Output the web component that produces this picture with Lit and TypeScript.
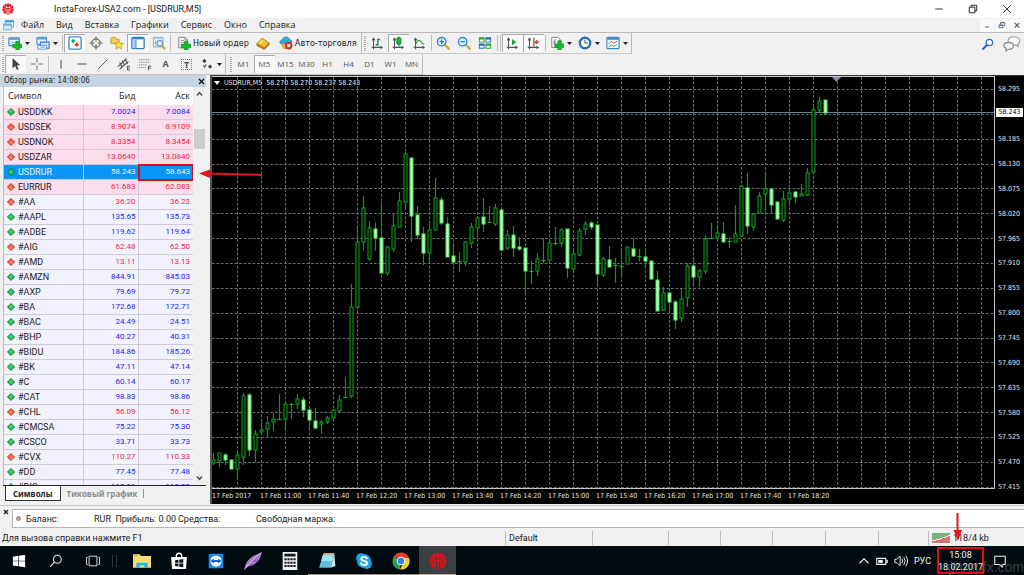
import { LitElement, html, css, svg, nothing } from "lit";
import { customElement } from "lit/decorators.js";
import { classMap } from "lit/directives/class-map.js";

type Quote = [name: string, bid: string, ask: string, up: boolean, group: "fx" | "stock"];

const QUOTES: Quote[] = [
  ["USDDKK", "7.0024", "7.0084", true, "fx"],
  ["USDSEK", "8.9074", "8.9109", false, "fx"],
  ["USDNOK", "8.3354", "8.3454", false, "fx"],
  ["USDZAR", "13.0640", "13.0840", false, "fx"],
  ["USDRUR", "58.243", "58.643", true, "fx"],
  ["EURRUR", "61.683", "62.083", false, "fx"],
  ["#AA", "36.20", "36.23", false, "stock"],
  ["#AAPL", "135.65", "135.73", true, "stock"],
  ["#ADBE", "119.62", "119.64", true, "stock"],
  ["#AIG", "62.48", "62.50", false, "stock"],
  ["#AMD", "13.11", "13.13", false, "stock"],
  ["#AMZN", "844.91", "845.03", true, "stock"],
  ["#AXP", "79.69", "79.72", true, "stock"],
  ["#BA", "172.68", "172.71", true, "stock"],
  ["#BAC", "24.49", "24.51", true, "stock"],
  ["#BHP", "40.27", "40.31", true, "stock"],
  ["#BIDU", "184.86", "185.26", true, "stock"],
  ["#BK", "47.11", "47.14", true, "stock"],
  ["#C", "60.14", "60.17", true, "stock"],
  ["#CAT", "98.83", "98.86", true, "stock"],
  ["#CHL", "56.09", "56.12", false, "stock"],
  ["#CMCSA", "75.22", "75.30", true, "stock"],
  ["#CSCO", "33.71", "33.73", true, "stock"],
  ["#CVX", "110.27", "110.33", false, "stock"],
  ["#DD", "77.45", "77.48", true, "stock"],
  ["#DIS", "110.01", "110.03", true, "stock"],
];

/* high, body top, body bottom, low, 1 = falling (filled) */
const CANDLES: number[][] = [
  [453, 460, 463, 465, 0], [453, 453, 461, 467, 0], [453, 455, 460, 465, 1], [460, 460, 469, 469, 1],
  [452, 455, 469, 480, 0], [393, 396, 457, 465, 0], [393, 395, 450, 456, 1], [430, 434, 450, 462, 0],
  [420, 430, 432, 435, 0], [416, 423, 429, 438, 0], [413, 419, 422, 431, 0], [394, 419, 419, 419, 0],
  [401, 404, 419, 428, 0], [403, 404, 404, 419, 0], [394, 399, 404, 409, 0], [397, 400, 410, 417, 1],
  [408, 410, 420, 429, 1], [408, 421, 428, 429, 1], [420, 422, 424, 434, 0], [416, 418, 422, 424, 0],
  [409, 410, 418, 419, 0], [395, 400, 411, 412, 0], [377, 397, 398, 398, 0], [284, 307, 396, 398, 0],
  [228, 242, 307, 309, 0], [196, 208, 242, 250, 0], [221, 228, 259, 261, 0], [222, 229, 238, 251, 1],
  [202, 238, 273, 273, 1], [246, 247, 273, 276, 0], [213, 226, 249, 252, 0], [192, 201, 227, 227, 0],
  [149, 154, 202, 208, 0], [158, 158, 216, 242, 1], [206, 215, 235, 239, 1], [227, 234, 253, 265, 1],
  [223, 230, 253, 262, 0], [178, 198, 230, 230, 0], [197, 200, 223, 225, 1], [217, 224, 257, 257, 1],
  [243, 256, 262, 265, 1], [252, 261, 261, 272, 0], [241, 242, 262, 266, 0], [223, 227, 243, 248, 0],
  [216, 218, 228, 237, 0], [198, 217, 224, 232, 1], [206, 222, 223, 223, 0], [204, 208, 224, 226, 0],
  [210, 210, 250, 250, 1], [230, 235, 248, 250, 0], [226, 235, 248, 257, 1], [237, 247, 249, 251, 1],
  [248, 248, 271, 293, 1], [261, 271, 271, 284, 0], [253, 259, 271, 276, 0], [238, 260, 260, 263, 0],
  [240, 243, 260, 262, 0], [227, 243, 243, 245, 0], [228, 230, 243, 247, 0], [229, 229, 268, 278, 1],
  [248, 254, 269, 271, 0], [228, 231, 255, 256, 0], [221, 224, 229, 235, 0], [221, 223, 227, 230, 1],
  [225, 225, 274, 287, 1], [257, 259, 275, 277, 0], [246, 260, 267, 267, 1], [258, 265, 265, 283, 0],
  [251, 266, 266, 275, 0], [247, 247, 264, 264, 0], [238, 249, 256, 257, 1], [249, 256, 256, 261, 0],
  [248, 257, 261, 266, 1], [261, 261, 279, 280, 1], [271, 280, 311, 311, 1], [287, 293, 310, 311, 0],
  [292, 293, 302, 311, 1], [300, 302, 320, 329, 1], [289, 299, 318, 322, 0], [263, 266, 298, 307, 0],
  [257, 266, 277, 284, 1], [269, 271, 277, 287, 0], [235, 239, 271, 274, 0], [223, 238, 238, 239, 0],
  [225, 233, 237, 240, 0], [222, 234, 242, 242, 1], [237, 241, 241, 248, 0], [205, 234, 242, 242, 0],
  [186, 186, 236, 236, 0], [173, 188, 226, 234, 1], [213, 214, 227, 231, 0], [192, 196, 213, 213, 0],
  [173, 189, 194, 213, 0], [189, 189, 205, 213, 1], [202, 202, 219, 219, 1], [191, 199, 220, 222, 0],
  [189, 193, 199, 203, 0], [191, 192, 197, 203, 1], [184, 194, 196, 196, 0], [168, 173, 195, 196, 0],
  [107, 110, 172, 172, 0], [97, 101, 110, 112, 0], [100, 100, 113, 115, 1],
];

const PRICES = ["58.295", "", "58.185", "58.130", "58.075", "58.020", "57.965", "57.910", "57.855",
  "57.800", "57.745", "57.690", "57.635", "57.580", "57.525", "57.470", "57.415"];
const TIMES = ["17 Feb 2017", "17 Feb 11:00", "17 Feb 11:40", "17 Feb 12:20", "17 Feb 13:00", "17 Feb 13:40",
  "17 Feb 14:20", "17 Feb 15:00", "17 Feb 15:40", "17 Feb 16:20", "17 Feb 17:00", "17 Feb 17:40", "17 Feb 18:20"];

const plus = (x: number, y: number) => svg`<path d="M${x} ${y - 5}h4v3.5h3.5v4h-3.5v3.5h-4v-3.5h-3.5v-4h3.5z" fill="#12b92c" stroke="#078a1b" stroke-width=".7"/>`;
const axes = svg`<path d="M4 3v12M2 13h12M2.500 5L4 2.500 5.500 5M12 11.500l2 1.500-2 1.500" fill="none" stroke="#555" stroke-width="1.200"/>`;
const lens = (c: string, sign: unknown) => svg`<path d="M10 10l4.500 4.500" stroke="#d9a735" stroke-width="2.800" stroke-linecap="round"/><circle cx="6.500" cy="6.500" r="4.800" fill="#e2f3ff" stroke="${c}" stroke-width="1.600"/>${sign}`;
const insta = svg`<path d="M4.500 12.800A5.800 5.800 0 1 1 11.500 12.800" fill="none" stroke="#e0121b" stroke-width="3.600" stroke-dasharray="2.700 .45"/><path d="M8 6.500v9.300M5.300 7.500v7.500M10.700 7.500v7.500" stroke="#e0121b" stroke-width="1.500" fill="none"/><path d="M4 6.500q4 2.600 8 0" fill="none" stroke="#e0121b" stroke-width="1.500"/><circle cx="8" cy="4.600" r="1.500" fill="#e0121b"/>`;

const ICONS: Record<string, unknown> = {
  insta,
  doc: svg`<path d="M3 2h11v9H3z" fill="#dff0ff" stroke="#4a93cf"/><path d="M3 2h11v2.500H3z" fill="#4a9be0"/><path d="M1 7h10v7.500H1z" fill="#eef8ff" stroke="#4a93cf"/><path d="M1 7h10v2H1zM3 12h6" fill="#67aee6" stroke="#67aee6" stroke-width=".7"/>`,
  newchart: svg`<rect x="1" y="2" width="12" height="9" rx="1" fill="#e8f5ff" stroke="#3a86c4" stroke-width="1.300"/><path d="M1.500 3.500h11" stroke="#3a86c4" stroke-width="1.500"/><path d="M3 9l2.500-2 2 1L10 6" fill="none" stroke="#5ca1d4"/>${plus(9, 11)}`,
  profiles: svg`<rect x="1" y="1.500" width="11" height="8" rx="1" fill="#eaf5ff" stroke="#4589c8" stroke-width="1.200"/><path d="M1.500 3.200h10" stroke="#4589c8" stroke-width="1.500"/><path d="M5 7h10v7H5z" fill="#c9e3f8" stroke="#3b78b8" stroke-width="1.200"/><path d="M2 11h10v4H2zM5 12.800h5" fill="#eff8ff" stroke="#5d96ca"/>`,
  watch: svg`<rect x="1" y="1" width="14" height="14" rx="1.500" fill="#f8fdff" stroke="#358fd0" stroke-width="1.500"/><path d="M6 3.200l2.500 2.500L6 8.200 3.500 5.700z" fill="#17a83a"/><path d="M10 7.200l2.700 2.700L10 12.600 7.300 9.900z" fill="#e53b20"/>`,
  target: svg`<circle cx="8" cy="8" r="4.700" fill="#fff" stroke="#666" stroke-width="1.400"/><path d="M8 .5v6M8 9.500v6M.5 8h6M9.500 8h6" stroke="#666" stroke-width="1.300"/>`,
  folder: svg`<path d="M1 3.500l1-2h4l1 2h3v5H1z" fill="#f5cf58" stroke="#b48a1d" stroke-width=".8"/><path d="M10 5l1.600 3.200 3.600.5-2.600 2.500.6 3.600L10 13.100l-3.200 1.700.6-3.600-2.600-2.500 3.600-.5z" fill="#ffe048" stroke="#c08b17" stroke-width=".9"/>`,
  nav: svg`<rect x="1" y="1.500" width="14" height="13" rx="1.500" fill="#f8fcff" stroke="#2d80c7" stroke-width="1.500"/><path d="M2 3h12" stroke="#2d80c7" stroke-width="1.600"/><path d="M2 4h3.500v10H2z" fill="#aacdf0"/><path d="M5.700 4v10" stroke="#2d80c7"/>`,
  tester: svg`<path d="M1.500 1.500h11v11h-11z" fill="#eef6fc" stroke="#86a9c6"/><path d="M2 3h10M4 5v7M7 5v7M2 8h9" stroke="#9bb9d2"/><path d="M11 11l4 4" stroke="#d9a735" stroke-width="2.500"/><circle cx="9" cy="8.500" r="3.300" fill="#d8edfb" stroke="#588fc2" stroke-width="1.200"/>`,
  order: svg`<path d="M2 1.500h7l3 3v9H2z" fill="#fafafa" stroke="#777"/><path d="M9 1.500v3h3M4 5h4M4 7.500h6M4 10h4" fill="none" stroke="#888"/>${plus(8.500, 11)}`,
  book: svg`<path d="M1 9l6-6.500L15 8l-5.500 6z" fill="#f5c531" stroke="#a87505"/><path d="M1 9l8.500 5L15 8v2l-5.500 5.500L1 11z" fill="#d18c12" stroke="#9b6704" stroke-width=".7"/><path d="M4 8.500L7.500 5" stroke="#fff2a8" stroke-width="1.300"/>`,
  auto: svg`<path d="M2 7.500h11L10.500 14H5z" fill="#f3c64a" stroke="#ad801c" stroke-width=".8"/><path d="M.8 7.500C1 5 3 4.500 4 4c.6-2 2-3 4-3s3.600 1 4 3c1.300.4 3 1.200 3 3-2 1.800-4 2-7 2s-6-.3-7.200-1.500z" fill="#37a5df" stroke="#1877ad" stroke-width=".7"/><circle cx="11" cy="11" r="4.300" fill="#e32b1c"/><rect x="9.300" y="9.300" width="3.400" height="3.400" fill="#fff"/>`,
  bars: svg`${axes}<path d="M9 3v8M9 4h2.500M6.500 10H9" stroke="#119436" stroke-width="1.500"/>`,
  candle: svg`${axes}<path d="M9 .5v12" stroke="#12962f" stroke-width="1.200"/><rect x="6.700" y="2" width="4.600" height="7.500" rx="1" fill="#18b940" stroke="#0c7d25"/>`,
  line: svg`${axes}<path d="M4 9.500c3-6 5-5 6.500-2.500 1 1.500 2 2 3.500 2.500" fill="none" stroke="#2f9f4b" stroke-width="1.300"/>`,
  zoomin: lens("#3089cd", svg`<path d="M4 6.500h5M6.500 4v5" stroke="#2174b8" stroke-width="1.400"/>`),
  zoomout: lens("#3089cd", svg`<path d="M4 6.500h5" stroke="#2174b8" stroke-width="1.400"/>`),
  tile: svg`<path d="M1 1.500h6.500v6H1zM8.500 8.500H15v6H8.500z" fill="#2f9e38"/><path d="M8.500 1.500H15v6H8.500zM1 8.500h6.500v6H1z" fill="#2b69b8"/><path d="M2 4h4.500v2.500H2zM9.500 4H14v2.500H9.500zM2 11h4.500v2.500H2zM9.500 11H14v2.500H9.500z" fill="#e5f5ee"/>`,
  scroll: svg`${axes}<path d="M8 3.500l5 3.500-5 3.500z" fill="#16a532"/>`,
  shift: svg`${axes}<path d="M9 2v10" stroke="#555" stroke-width="1.300"/><path d="M15 7h-4M13 4.800L10.500 7 13 9.200" fill="none" stroke="#d53426" stroke-width="1.300"/>`,
  indicator: svg`<path d="M2 1.500h7l2.500 2.500v9H2z" fill="#f8f8f8" stroke="#777"/><path d="M6.500 4c-2 0-1 3-2 6M4 7h3" fill="none" stroke="#777"/>${plus(9, 10.500)}`,
  clock: svg`<circle cx="8" cy="8" r="6" fill="#f4faff" stroke="#246fb9" stroke-width="2.600"/><path d="M8 4.500V8h3.500" fill="none" stroke="#555" stroke-width="1.200"/>`,
  template: svg`<rect x="1" y="1.500" width="14" height="13" rx="1" fill="#f5fbff" stroke="#3f86bd" stroke-width="1.300"/><path d="M1.500 3.300h13" stroke="#3f8fd0" stroke-width="2.200"/><path d="M3 8.500l3-2 3 1.500 4-2" fill="none" stroke="#c3543f"/><path d="M3 12.500l3-2.500 3 2 4-2.500" fill="none" stroke="#2f9e4b"/>`,
  search: svg`<path d="M6.500 9.500L1.500 14.500" stroke="#2457b5" stroke-width="2.800" stroke-linecap="round"/><circle cx="9.800" cy="6" r="4.300" fill="#fff" stroke="#2f6bd0" stroke-width="1.700"/>`,
  chat: svg`<path d="M9.500 1.500c3 0 5.500 1.600 5.500 3.900 0 1.300-.7 2.200-1.700 2.900l.4 2-2.200-1.300c-3.500.5-7-.9-7-3.600 0-2.300 2-3.900 5-3.900z" fill="#f5f5f5" stroke="#999"/><path d="M5 6.500c2.500 0 4.300 1.200 4.300 3S7.500 12.700 5 12.700L2.500 14l.4-2C1.500 11.500.700 10.600.700 9.500c0-1.800 1.800-3 4.300-3z" fill="#eee" stroke="#888"/>`,
  cursor: svg`<path d="M4 1v12l3-2.800 2 4.600 2-.9-2-4.400h4z" fill="#444"/>`,
  cross: svg`<path d="M8 1v5.500M8 9.500V15M1 8h5.500M9.500 8H15" stroke="#777" stroke-width="1.100"/>`,
  vline: svg`<path d="M8 3v10" stroke="#555" stroke-width="1.200"/>`,
  hline: svg`<path d="M3 8h10" stroke="#555" stroke-width="1.200"/>`,
  trend: svg`<path d="M3 13L13 3" stroke="#555" stroke-width="1.100"/>`,
  channel: svg`<path d="M1 11l10-9M3 14l10-9M3 6l3 6M6 4l3 6M9 2l3 6" stroke="#555" stroke-width="1.200"/><path d="M15 10.500h-3v4.500h3M12 12.700h2.500" fill="none" stroke="#444"/>`,
  fibo: svg`<path d="M1 3h13M1 6h13M1 9h10M1 12h8" stroke="#777" stroke-dasharray="1.500 1"/><path d="M15 10.500h-3V15M12 12.700h2.500" fill="none" stroke="#444"/>`,
  arrows: svg`<path d="M5 2l2.500 2.500L5 7 2.500 4.500zM11.500 8.500L14 11l-2.500 2.500L9 11z" fill="#444"/><path d="M3.500 9.500l2 2 1.500-3" fill="none" stroke="#555" stroke-width="1.300"/>`,
  win: svg`<path d="M1 3l6-.9v5.500H1zM7.700 2L15 1v6.600H7.700zM1 8.300h6v5.600L1 13zM7.700 8.300H15V15l-7.300-1z" fill="#fff"/>`,
  find: svg`<circle cx="9.500" cy="6" r="4.500" fill="none" stroke="#eee" stroke-width="1.200"/><path d="M6.300 9.300L1.500 14.500" stroke="#eee" stroke-width="1.300"/>`,
  tasks: svg`<path d="M3.500 2.500h9v11h-9zM2 4H.5v8H2M14 4h1.500v8H14" fill="none" stroke="#ddd" stroke-width="1.100"/>`,
  explorer: svg`<path d="M0 2h6l1 1.500h9V14H0z" fill="#f9dc7b"/><path d="M1 3.500h3" stroke="#e0a52e"/><path d="M3 14V9.500h10V14h-3v-2H6v2z" fill="#27b3e1"/>`,
  store: svg`<path d="M1 4.500h14l-.8 10.500H1.800z" fill="#fff"/><path d="M5.500 4.500c0-4.500 5-4.500 5 0" fill="none" stroke="#fff" stroke-width="1.200"/><path d="M4.500 7.300l3-.4v2.600h-3zM8.200 6.800l3.600-.5v3.200H8.200zM4.500 10.200h3v2.600l-3-.4zM8.200 10.200h3.600v3.300l-3.600-.5z" fill="#06141c"/>`,
  tv: svg`<rect x="1.500" y="1.500" width="13" height="13" rx="1" fill="#1587ee"/><circle cx="8" cy="8" r="5" fill="#fff"/><path d="M3 8l3-2.200v1.400h4V5.800L13 8l-3 2.200V8.800H6v1.400z" fill="#1268c4"/>`,
  feather: svg`<path d="M.5 15.500C1 8 7 3 15.500.5 15.500 5 12 11.500 3.500 13z" fill="#a678c7"/><path d="M.5 15.500C5 9 9 5.500 15.500.5" stroke="#e0c9ee" fill="none" stroke-width=".8"/><path d="M5 11.500h4M8 8h5" stroke="#774a98" stroke-width=".7"/>`,
  calc: svg`<path d="M1.500 0h13v16h-13z" fill="#f3f3f3"/><path d="M3 1.500h10V4H3z" fill="#121a1f"/><path d="M3 6.500h10M3 9.500h10M3 12.500h10" stroke="#121a1f" stroke-width="1.800" stroke-dasharray="2 .67"/>`,
  note: svg`<path d="M4.500 2h10L11 14H1z" fill="#63c0d8"/><path d="M4.500 2h10l-1.800 6H2.800z" fill="#9fe1ee"/><path d="M14.500 2l1 10.500L11 14z" fill="#d9dfe2"/><path d="M5 1.500h9.500" stroke="#d7a85b" stroke-width="1.200"/>`,
  skype: svg`<circle cx="5.500" cy="5.500" r="4.500" fill="#17a6e6"/><circle cx="10.500" cy="10.500" r="4.500" fill="#17a6e6"/><circle cx="8" cy="8" r="6.300" fill="#17a6e6"/><path d="M10.700 5.500C9.800 4 5.700 3.900 5.700 6.200c0 2.300 5 1.200 5 3.600 0 2.300-4.500 2.300-5.500.3" fill="none" stroke="#fff" stroke-width="1.700" stroke-linecap="round"/>`,
  chrome: svg`<path d="M8 8L1.500 4.200A7.500 7.500 0 0 1 15 5H8z" fill="#e53e30"/><path d="M8 8l-1 7.500A7.500 7.500 0 0 1 1.500 4.200z" fill="#27a652"/><path d="M8 5h7A7.500 7.500 0 0 1 7 15.500L10.500 9z" fill="#fccb2e"/><circle cx="8" cy="8" r="3.700" fill="#fff"/><circle cx="8" cy="8" r="2.900" fill="#3b7ded"/>`,
  up: svg`<path d="M2 11l6-6 6 6" fill="none" stroke="#eee" stroke-width="1.500"/>`,
  battery: svg`<path d="M1 4.500h12v8H1zM13 7h2v3h-2" fill="none" stroke="#eee" stroke-width="1.400"/><path d="M3 6.500h6v4H3z" fill="#fff"/>`,
  sound: svg`<path d="M1 6h2.500L7 2.500v11L3.500 10H1zM9 5.500q2 2.500 0 5M11.200 3.700q3.300 4.300 0 8.600M13.300 2q4.500 6 0 12" fill="none" stroke="#eee" stroke-width="1.100"/>`,
  notice: svg`<path d="M2 2.500h12v9.500h-3.500v3L7.500 12H2z" fill="none" stroke="#eee" stroke-width="1.200"/>`,
  min: svg`<path d="M3 8h10" stroke="#222" stroke-width="1.200"/>`,
  restore: svg`<path d="M3 5.500h7.500V13H3zM5.500 5.500V3H13v7.500h-2.500" fill="none" stroke="#222" stroke-width="1.300"/>`,
  close: svg`<path d="M3 3l10 10M13 3L3 13" stroke="#222" stroke-width="1.200"/>`,
  mmin: svg`<path d="M4 12h8" stroke="#567" stroke-width="2"/>`,
  mrestore: svg`<path d="M2 8h8v5.500H2zM5 7V3h8.500v6H11M2 8.500h8M5 3.500h8" fill="none" stroke="#567" stroke-width="1.800"/>`,
  mclose: svg`<path d="M3.500 4l9 9M12.500 4l-9 9" stroke="#567" stroke-width="2.400"/>`,
};

const icon = (name: string, cls = "i14") => html`<svg class=${cls} viewBox="0 0 16 16" aria-hidden="true">${ICONS[name]}</svg>`;

@customElement("candle-chart")
class CandleChart extends LitElement {
  static styles = css`
    :host { display: grid; grid-template: minmax(0, 1fr) 15px / minmax(0, 1fr) 29px; background: #000; color: #e6e6e6;
      font: 7px/10px "DejaVu Sans Condensed", "DejaVu Sans", sans-serif; min-width: 0; position: relative;
      border-left: 2px solid #555; border-top: 1px solid #333; }
    .plot { width: 100%; height: 100%; display: block; border: solid #c8c8c8; border-width: 1px 1px 1px 0; box-sizing: border-box; }
    .prices { display: flex; flex-direction: column; padding-top: 8px; }
    .price { height: 25px; padding-left: 3px; flex: none; }
    .price:nth-child(7n) { height: 24px; }
    .times { display: flex; overflow: hidden; padding-top: 2px; grid-column: 1 / -1; }
    .time { flex: 0 0 48px; white-space: nowrap; }
    .title { position: absolute; left: 2px; top: 2px; display: flex; gap: 4px; align-items: center; }
    .mark { width: 6px; height: 4px; }
    .now { position: absolute; right: 1px; top: 32px; width: 27px; background: #fff; color: #000; text-align: center; line-height: 9px; }
  `;

  private candle(c: number[], i: number) {
    const [high, top, bottom, low, falling] = c;
    const x = 1.5 + i * 6;
    const wick = svg`<path d="M${x} ${high}V${top}M${x} ${bottom}V${low}" stroke="#0b9d10" stroke-width="1.200"/>`;
    if (bottom - top < 2) {
      return svg`${wick}<path d="M${x - 2} ${top + 0.5}h4" stroke="#12b818" stroke-width="1.200"/>`;
    }
    return svg`${wick}<rect x=${x - 1.5} y=${top} width="3" height=${bottom - top} fill=${falling ? "#c4ffc4" : "#000"}
      stroke=${falling ? "#4be85c" : "#12a818"} stroke-width="1"/>`;
  }

  render() {
    const columns = Array.from({ length: 80 }, (_, i) => 25.5 + i * 24);
    const rows = PRICES.map((_, i) => Math.round(89 + i * 24.86) + 0.5);
    return html`
      <svg class="plot" role="img" aria-label="USDRUR M5">
        <g transform="translate(0 -77)">
          <g stroke="#66707b" stroke-width="1" stroke-dasharray="2.700 1.800">
            ${columns.map((x) => svg`<path d="M${x} 77v430"/>`)}
            ${rows.map((y) => svg`<path d="M0 ${y}h2400"/>`)}
          </g>
          <path d="M0 112.500h2400" stroke="#70808c"/>
          <path d="M620 77h9l-4.500 5z" fill="#8492a6"/>
          ${CANDLES.map((c, i) => this.candle(c, i))}
        </g>
      </svg>
      <div class="prices">${PRICES.map((p) => html`<span class="price">${p}</span>`)}</div>
      <div class="times">${TIMES.map((t) => html`<span class="time">${t}</span>`)}</div>
      <div class="title"><svg class="mark" viewBox="0 0 6 4"><path d="M0 0h6L3 4z" fill="#fff"/></svg>
        <span>USDRUR,M5&nbsp; 58.270 58.270 58.237 58.243</span></div>
      <span class="now">58.243</span>`;
  }
}

@customElement("market-watch")
class MarketWatch extends LitElement {
  static styles = css`
    :host { display: flex; flex-direction: column; min-height: 0; background: #f0f0f0; font: 9px/14px Roboto, "Open Sans", sans-serif; padding: 0 4px 3px 3px; }
    button { font: inherit; border: 0; background: none; padding: 0; color: inherit; }
    .head { display: flex; justify-content: space-between; align-items: center; height: 12px; margin-left: -3px; padding: 0 1px 0 4px; background: #c6d5e4; font: 8px/12px "DejaVu Sans Condensed", sans-serif; color: #222; }
    .x { width: 7px; height: 7px; display: block; }
    .list { flex: 1; min-height: 0; display: grid; grid-template: minmax(0, 1fr) / minmax(0, 1fr) 13px; border-bottom: 1px solid #222; }
    .clip { overflow: hidden; background: #fff; border-left: 1px solid #bbb; }
    table { width: 100%; border-collapse: separate; border-spacing: 0; table-layout: fixed; }
    th { height: 18px; padding: 0 3px; font: 9px/14px "Open Sans", sans-serif; text-align: right; box-sizing: border-box; }
    th:first-child { width: 80px; text-align: left; padding-left: 4px; }
    td { height: 15px; line-height: 14px; padding: 0 2px 0 0; box-sizing: border-box; border-right: 1px solid #cdccd4; border-bottom: 1px solid #cdccd4; text-align: right; color: #2222f4; }
    td:last-child { border-right: 0; padding-right: 3px; }
    td:first-child { text-align: left; color: #222; padding-left: 3px; }
    .cell { display: flex; align-items: center; gap: 3px; }
    .tick { width: 8px; height: 8px; flex: none; }
    .num { font-size: 8px; }
    .fx td { background: #fddcee; }
    .stock td { background: #f2f2fe; }
    .down .num { color: #f52238; }
    .selected td, .selected .num { background: #0995f8; color: #e8f6ff; }
    .selected .ask { outline: 2px solid #d50f2a; outline-offset: -1px; }
    .bar { display: flex; flex-direction: column; align-items: center; background: #f0f0f0; padding: 4px 0; }
    .arrow { width: 7px; height: 6px; }
    .thumb { width: 11px; height: 20px; background: #cdcdcd; margin-top: 32px; }
    .gap { flex: 1; }
    .tabs { display: flex; height: 15px; padding-left: 2px; font: bold 8px/13px "Open Sans", sans-serif; }
    .tab { padding: 0 6px; color: #8c8c8c; }
    .tab.on { padding: 0 7px; color: #222; background: #fff; border: 1px solid #333; border-top: 0; }
    .end { width: 1px; height: 9px; background: #999; margin-top: 3px; }
  `;

  render() {
    return html`
      <div class="head"><span>Обзор рынка: 14:08:06</span>
        <button aria-label="Закрыть"><svg class="x" viewBox="0 0 7 7"><path d="M1 1l5 5M6 1L1 6" stroke="#111" stroke-width="1.300"/></svg></button></div>
      <div class="list">
        <div class="clip"><table>
          <thead><tr><th>Символ</th><th>Бид</th><th>Аск</th></tr></thead>
          <tbody>${QUOTES.map(([name, bid, ask, up, group]) => html`
            <tr class=${classMap({ [group]: true, down: !up, selected: name === "USDRUR" })}>
              <td><span class="cell"><svg class="tick" viewBox="0 0 8 8"><path d="M4 .4L7.600 4 4 7.600.4 4z" fill=${up ? "#1fb84a" : "#ee5a34"} stroke=${up ? "#0c7d2c" : "#b9361b"} stroke-width=".8"/><path d=${up ? "M4 5.800V2.600M2.800 3.800L4 2.600l1.200 1.200" : "M4 2.200v3.200M2.800 4.200L4 5.400l1.200-1.200"} fill="none" stroke=${up ? "#8fe8a4" : "#ffc4ae"} stroke-width=".6"/></svg>${name}</span></td>
              <td class="num">${bid}</td><td class="num ask">${ask}</td>
            </tr>`)}</tbody>
        </table></div>
        <div class="bar">
          <svg class="arrow" viewBox="0 0 7 6"><path d="M1 4.500L3.500 1.500 6 4.500" fill="none" stroke="#444" stroke-width="1.300"/></svg>
          <div class="thumb"></div><div class="gap"></div>
          <svg class="arrow" viewBox="0 0 7 6"><path d="M1 1.500L3.500 4.500 6 1.500" fill="none" stroke="#444" stroke-width="1.300"/></svg>
        </div>
      </div>
      <div class="tabs"><button class="tab on">Символы</button><button class="tab">Тиковый график</button><span class="end"></span></div>`;
  }
}

@customElement("app-root")
class AppRoot extends LitElement {
  static styles = css`
    :host { display: flex; flex-direction: column; height: 100vh; position: relative; overflow: hidden; background: #f0f0f0; color: #222; font: 9px/14px Roboto, "Open Sans", sans-serif; }
    button { font: inherit; color: inherit; border: 0; background: none; padding: 0; display: flex; align-items: center; justify-content: center; white-space: nowrap; }
    svg { display: block; flex: none; }
    .i8 { width: 8px; height: 8px; }
    .i12 { width: 12px; height: 12px; }
    .i14 { width: 14px; height: 14px; }
    .i18 { width: 18px; height: 18px; }
    .caption { display: flex; align-items: center; height: 18px; flex: none; background: #fff; padding-left: 2px; }
    .name { flex: 1; padding-left: 40px; }
    .sys { width: 34px; height: 18px; }
    .menu { display: flex; align-items: center; height: 14px; flex: none; padding-left: 3px; border-bottom: 1px solid #bbb; }
    .items { display: flex; gap: 12px; flex: 1; padding-left: 6px; font-family: "Open Sans", sans-serif; }
    .mdi { width: 14px; height: 13px; background: #fafafa; margin-left: 1px; }
    .bar { display: flex; align-items: center; height: 21px; flex: none; }
    .bar + .bar { gap: 2px; }
    .group { display: flex; align-items: center; height: 20px; border-right: 1px solid #bbb; border-bottom: 1px solid #c8c8c8; }
    .grip { width: 2px; height: 15px; margin: 0 1px 0 2px; background: repeating-linear-gradient(#aaa 0 1px, #f0f0f0 1px 2px); }
    .tool { width: 21px; height: 18px; }
    .tool.on { background: #f9f9f9; box-shadow: inset 1px 1px #aaa; }
    .tool.drop { width: 28px; gap: 3px; }
    .tool.label { width: auto; gap: 2px; padding: 0 4px 0 5px; font: 9px/14px "DejaVu Sans Condensed", sans-serif; }
    .tool.period { font: 8px/12px "Open Sans", sans-serif; color: #555; }
    .tool.letter { font: bold 9px/12px "Open Sans", sans-serif; color: #555; }
    .boxed { border: 1px dotted #777; width: 9px; line-height: 9px; }
    .caret { width: 5px; height: 3px; }
    .sep { width: 1px; height: 16px; background: #bbb; margin: 0 1px; }
    .right { margin-left: auto; display: flex; gap: 9px; padding-right: 3px; }
    .main { flex: 1; min-height: 0; display: grid; grid-template: minmax(0, 1fr) / 210px minmax(0, 1fr); padding-bottom: 1px; }
    .terminal { display: flex; height: 23px; flex: none; border-top: 1px solid #c4c4c4; box-sizing: border-box; }
    .side { width: 12px; display: flex; justify-content: center; padding-top: 3px; }
    .box { flex: 1; margin-top: 3px; background: #fff; border: 1px solid #b4b4b4; border-right: 0; display: flex; align-items: center; padding-left: 3px; }
    .dot { width: 5px; height: 5px; border-radius: 50%; background: #aaa; border: 1px solid #888; box-sizing: border-box; margin-right: 5px; }
    .balance { width: 68px; }
    .profit { width: 84px; white-space: pre; }
    .funds { width: 78px; }
    .status { display: grid; grid-template-columns: minmax(0, 1fr) 87px 76px 52px 52px 53px 53px 50px 96px; align-items: center; height: 17px; flex: none; padding-top: 1px; }
    .status > span { height: 14px; border-left: 1px solid #bbb; padding-left: 3px; display: flex; align-items: center; gap: 3px; }
    .status > span:first-child { border: 0; padding-left: 2px; }
    .signal { width: 18px; height: 11px; }
    .tasks { display: flex; height: 29px; flex: none; background: #020b10; color: #f2f2f2; }
    .task { width: 37px; }
    .task.run { box-shadow: inset 0 -1px #9a8f7d; }
    .task.on { background: #394144; box-shadow: inset 0 -1px #c9a49a; }
    .split { width: 3px; height: 12px; border: solid #2a3338; border-width: 0 1px; margin: 9px 6px 0 1px; }
    .tray { margin-left: auto; display: flex; align-items: center; gap: 6px; }
    .clock { width: 47px; height: 27px; box-sizing: border-box; border: 2px solid #e40b1b; font-size: 9px; line-height: 12px; flex-direction: column; }
    .notice { width: 32px; height: 29px; margin-right: 8px; }
    .brand { position: absolute; right: 0; bottom: 1px; font: 14px/14px "Liberation Sans", sans-serif; color: #8a8a8a66; }
    .pointer { position: absolute; left: 198px; top: 168px; width: 66px; height: 12px; }
    .drop-pointer { position: absolute; right: 60px; bottom: 33px; width: 12px; height: 30px; }
  `;

  private tool(name: string, label: string, on = false, drop = false) {
    return html`<button class=${classMap({ tool: true, on, drop })} aria-label=${label}>${icon(name)}${drop
      ? html`<svg class="caret" viewBox="0 0 5 3"><path d="M0 0h5L2.500 3z" fill="#222"/></svg>` : nothing}</button>`;
  }

  render() {
    const sep = html`<span class="sep"></span>`;
    const grip = html`<span class="grip"></span>`;
    const task = (name: string, label: string, state = "", size = "i18") =>
      html`<button class=${`task ${state}`} aria-label=${label}>${icon(name, size)}</button>`;
    return html`
      <div class="caption">${icon("insta", "i12")}<span class="name">InstaForex-USA2.com - [USDRUR,M5]</span>
        <button class="sys" aria-label="Свернуть">${icon("min", "i12")}</button>
        <button class="sys" aria-label="Восстановить">${icon("restore", "i12")}</button>
        <button class="sys" aria-label="Закрыть">${icon("close", "i12")}</button>
      </div>
      <nav class="menu">${icon("doc", "i12")}
        <div class="items">${["Файл", "Вид", "Вставка", "Графики", "Сервис", "Окно", "Справка"].map((m) => html`<button>${m}</button>`)}</div>
        <button class="mdi" aria-label="Свернуть окно">${icon("mmin", "i8")}</button>
        <button class="mdi" aria-label="Восстановить окно">${icon("mrestore", "i8")}</button>
        <button class="mdi" aria-label="Закрыть окно">${icon("mclose", "i8")}</button>
      </nav>
      <div class="bar">
        <div class="group">${grip}
          ${this.tool("newchart", "Новый график", false, true)}${this.tool("profiles", "Профили", false, true)}${sep}
          ${this.tool("watch", "Обзор рынка", true)}${this.tool("target", "Окно данных")}${this.tool("folder", "Навигатор")}
          ${this.tool("nav", "Терминал", true)}${this.tool("tester", "Тестер стратегий")}${sep}
          <button class="tool label">${icon("order")}Новый ордер</button>
          ${this.tool("book", "MetaEditor")}
          <button class="tool label">${icon("auto")}Авто-торговля</button>
        </div>
        <div class="group">${grip}
          ${this.tool("bars", "Бары")}${this.tool("candle", "Японские свечи", true)}${this.tool("line", "Линия")}${sep}
          ${this.tool("zoomin", "Увеличить")}${this.tool("zoomout", "Уменьшить")}${this.tool("tile", "Упорядочить окна")}${sep}${sep}
          ${this.tool("scroll", "Автопрокрутка", true)}${this.tool("shift", "Сдвиг графика", true)}${sep}
          ${this.tool("indicator", "Индикаторы", false, true)}${this.tool("clock", "Периоды", false, true)}${this.tool("template", "Шаблоны", false, true)}
        </div>
        <div class="right"><button aria-label="Поиск">${icon("search", "i12")}</button><button aria-label="Чат">${icon("chat", "i18")}</button></div>
      </div>
      <div class="bar">
        <div class="group">${grip}
          ${this.tool("cursor", "Курсор", true)}${this.tool("cross", "Перекрестие")}${sep}
          ${this.tool("vline", "Вертикальная линия")}${this.tool("hline", "Горизонтальная линия")}${this.tool("trend", "Трендовая линия")}
          ${this.tool("channel", "Канал")}${this.tool("fibo", "Фибоначчи")}
          <button class="tool letter">A</button><button class="tool letter"><span class="boxed">T</span></button>
          ${this.tool("arrows", "Стрелки", false, true)}
        </div>
        <div class="group">${grip}
          ${["M1", "M5", "M15", "M30", "H1", "H4", "D1", "W1", "MN"].map((p) =>
            html`<button class=${classMap({ tool: true, period: true, on: p === "M5" })}>${p}</button>`)}
        </div>
      </div>
      <main class="main"><market-watch></market-watch><candle-chart></candle-chart></main>
      <div class="terminal">
        <div class="side"><svg width="6" height="6" viewBox="0 0 6 6"><path d="M1 1l4 4M5 1L1 5" stroke="#222" stroke-width="1.300"/></svg></div>
        <div class="box"><span class="dot"></span><span class="balance">Баланс:</span><span class="profit">RUR  Прибыль: 0.00</span>
          <span class="funds">Средства:</span><span>Свободная маржа:</span></div>
      </div>
      <div class="status"><span>Для вызова справки нажмите F1</span><span>Default</span><span></span><span></span><span></span><span></span><span></span><span></span>
        <span><svg class="signal" viewBox="0 0 18 11"><path d="M1 1v7M3 1v7M5 1v6M7 1v6M9 1v5M11 1v4M13 1v4M15 1v3M17 1v2" stroke="#36913a" stroke-width="1.300"/><path d="M1 9v2M3 9v2M5 8v3M7 8v3M9 7v4M11 6v5M13 6v5M15 5v6M17 4v7" stroke="#c63232" stroke-width="1.300"/></svg>118/4 kb</span>
      </div>
      <div class="tasks">
        ${task("win", "Пуск", "", "i14")}${task("find", "Поиск", "", "i14")}${task("tasks", "Представление задач", "", "i14")}
        <span class="split"></span>
        ${task("explorer", "Проводник")}${task("store", "Магазин")}${task("tv", "TeamViewer")}${task("feather", "Перо")}${task("calc", "Калькулятор")}
        ${task("note", "Блокнот", "run")}${task("skype", "Skype", "run")}${task("chrome", "Chrome", "run")}${task("insta", "InstaForex", "on")}
        <div class="tray">
          <button aria-label="Скрытые значки">${icon("up", "i12")}</button>
          <button aria-label="Батарея">${icon("battery", "i12")}</button>
          <button aria-label="Звук">${icon("sound")}</button>
          <button>РУС</button>
          <button class="clock"><span>15:08</span><span>18.02.2017</span></button>
        </div>
        <button class="notice" aria-label="Уведомления">${icon("notice")}</button>
      </div>
      <span class="brand">groupfx.com</span>
      <svg class="pointer" viewBox="0 0 66 12"><path d="M9 5.500L64 7" stroke="#e51420" stroke-width="2"/><path d="M1 5.500l11-4v8.500z" fill="#e51420"/></svg>
      <svg class="drop-pointer" viewBox="0 0 12 30"><path d="M5.500 1v20" stroke="#e51420" stroke-width="2"/><path d="M1.500 18h8.500L6 29z" fill="#e51420"/></svg>`;
  }
}
